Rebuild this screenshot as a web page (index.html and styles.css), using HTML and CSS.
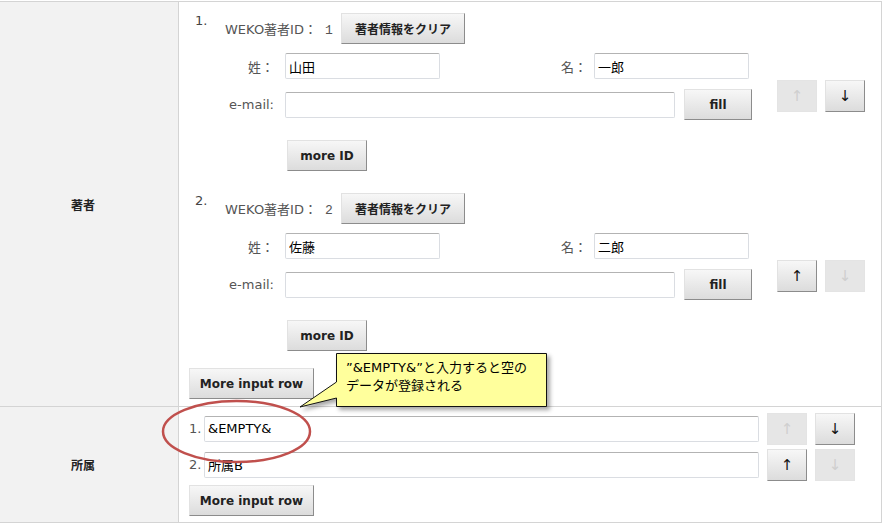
FILE: index.html
```html
<!DOCTYPE html>
<html lang="ja">
<head>
<meta charset="utf-8">
<title>著者・所属 入力</title>
<link rel="stylesheet" href="styles.css">
</head>
<body>
<div class="form">
  <div class="th th-author">著者</div>
  <div class="td td-author">
    <div class="author">
      <span class="num">1.</span>
      <div class="fields">
        <div class="id-row"><span class="lbl-id">WEKO著者ID：<span class="id-val">1</span></span><button class="btn btn-clear">著者情報をクリア</button></div>
        <div class="name-row"><label class="lbl">姓：</label><input class="inp inp-name" value="山田"><label class="lbl lbl-given">名：</label><input class="inp inp-name" value="一郎"></div>
        <div class="mail-row"><label class="lbl">e-mail:</label><input class="inp inp-mail" value=""><button class="btn btn-fill">fill</button></div>
        <div class="more-row"><button class="btn btn-more">more ID</button></div>
      </div>
      <div class="order order-author"><button class="btn btn-arrow" disabled>↑</button><button class="btn btn-arrow">↓</button></div>
    </div>
    <div class="author">
      <span class="num">2.</span>
      <div class="fields">
        <div class="id-row"><span class="lbl-id">WEKO著者ID：<span class="id-val">2</span></span><button class="btn btn-clear">著者情報をクリア</button></div>
        <div class="name-row"><label class="lbl">姓：</label><input class="inp inp-name" value="佐藤"><label class="lbl lbl-given">名：</label><input class="inp inp-name" value="二郎"></div>
        <div class="mail-row"><label class="lbl">e-mail:</label><input class="inp inp-mail" value=""><button class="btn btn-fill">fill</button></div>
        <div class="more-row"><button class="btn btn-more">more ID</button></div>
      </div>
      <div class="order order-author"><button class="btn btn-arrow">↑</button><button class="btn btn-arrow" disabled>↓</button></div>
    </div>
    <button class="btn btn-row">More input row</button>
  </div>

  <div class="th th-aff">所属</div>
  <div class="td td-aff">
    <div class="aff-row">
      <span class="aff-num">1.</span><input class="inp inp-aff" value="&amp;EMPTY&amp;">
      <div class="order order-aff"><button class="btn btn-arrow" disabled>↑</button><button class="btn btn-arrow">↓</button></div>
    </div>
    <div class="aff-row">
      <span class="aff-num">2.</span><input class="inp inp-aff" value="所属B">
      <div class="order order-aff"><button class="btn btn-arrow">↑</button><button class="btn btn-arrow" disabled>↓</button></div>
    </div>
    <button class="btn btn-row">More input row</button>
  </div>
</div>

<svg class="overlay" width="883" height="524" viewBox="0 0 883 524" aria-hidden="true">
  <path class="callout-shape" d="M336.5,353.5 H546.5 V406.5 H336.5 V398 L300,407 L336.5,382 Z"/>
  <ellipse class="mark" cx="236.5" cy="431.5" rx="73.5" ry="30.5"/>
</svg>
<div class="callout-text">”&amp;EMPTY&amp;”と入力すると空の<br>データが登録される</div>
</body>
</html>
```

FILE: styles.css
```css
* { box-sizing: border-box; }
html, body { margin: 0; padding: 0; background: #fff; }
body {
  font-family: "DejaVu Sans", "Noto Sans CJK JP", sans-serif;
  font-size: 13px;
  color: #333;
  position: relative;
  width: 883px;
  height: 524px;
  overflow: hidden;
}

.form {
  margin-top: 1px;
  width: 882px;
  display: grid;
  grid-template-columns: 179px 702px;
  border-top: 1px solid #d4d4d4;
  border-right: 1px solid #d4d4d4;
}

.th {
  background: #f2f2f2;
  border-right: 1px solid #d4d4d4;
  border-bottom: 1px solid #d4d4d4;
  display: flex;
  align-items: center;
  justify-content: center;
  padding-right: 12px;
  font-weight: bold;
  font-size: 12px;
  color: #222;
}
.td { border-bottom: 1px solid #d4d4d4; }
.th-author, .td-author { height: 405px; }
.th-aff, .td-aff { height: 116px; }

.td-author { padding: 11px 0 0 10px; }
.td-aff { padding: 6px 0 0 10px; }

/* buttons */
.btn {
  font-family: "DejaVu Sans", "Noto Sans CJK JP", sans-serif;
  font-weight: bold;
  font-size: 12px;
  color: #222;
  height: 31px;
  padding: 0;
  border: 1px solid;
  border-color: #e2e2e2 #8c8c8c #8c8c8c #e2e2e2;
  border-radius: 0;
  background: linear-gradient(#f7f7f7, #dcdcdc);
  display: block;
}
.btn:disabled {
  background: #e6e6e6;
  border-color: #e4e4e4;
  color: #cfcfcf;
}
.btn-clear { width: 124px; }
.btn-fill { width: 68px; margin-left: 9px; }
.btn-more { width: 80px; }
.btn-row { width: 125px; }
.btn-arrow { width: 40px; height: 32px; font-weight: normal; font-size: 15px; color: #111; }

/* inputs */
.inp {
  height: 26px;
  border: 1px solid #dadde2;
  border-top-color: #b3b3b3;
  border-radius: 2px;
  padding: 0 3px;
  font-family: "DejaVu Sans", "Noto Sans CJK JP", sans-serif;
  font-size: 13px;
  color: #000;
  background: #fff;
}
.inp-name { width: 155px; }
.inp-mail { width: 390px; }
.inp-aff { width: 555px; }

/* author block */
.author {
  display: flex;
  padding-left: 6px;
  height: 158px;
}
.author + .author { margin-top: 22px; }
.num {
  width: 30px;
  line-height: 13px;
  margin-top: 1px;
  color: #444;
}
.fields { width: 527px; }
.id-row { display: flex; align-items: center; height: 31px; }
.lbl-id { width: 116px; color: #555; }
.id-val { font-family: "Liberation Mono", monospace; margin-left: 8px; }
.name-row { display: flex; align-items: center; height: 26px; margin-top: 9px; }
.mail-row { display: flex; align-items: center; height: 31px; margin-top: 10px; }
.more-row { margin-top: 20px; padding-left: 62px; }
.lbl {
  width: 60px;
  padding-right: 11px;
  text-align: right;
  color: #555;
}
.lbl-given { width: 154px; padding-right: 7px; }

.order { display: flex; gap: 8px; }
.order-author { margin-left: 25px; margin-top: 67px; }

.td-author .btn-row { margin-top: 17px; }

/* affiliation */
.aff-row { display: flex; align-items: center; height: 31px; }
.aff-row + .aff-row { margin-top: 5px; }
.aff-num { width: 15px; color: #555; }
.order-aff { margin-left: 8px; }
.td-aff .btn-row { margin-top: 5px; }

/* overlays */
.overlay {
  position: absolute;
  left: 0;
  top: 0;
  pointer-events: none;
}
.callout-shape {
  fill: #ffff9c;
  stroke: #111;
  stroke-width: 1;
  filter: drop-shadow(3px 3px 2px rgba(0, 0, 0, 0.35));
}
.mark {
  fill: none;
  stroke: #c0504d;
  stroke-width: 2.5;
}
.callout-text {
  position: absolute;
  left: 336px;
  top: 353px;
  width: 211px;
  height: 54px;
  padding: 6px 0 0 10px;
  font-size: 13px;
  line-height: 18px;
  color: #000;
  white-space: nowrap;
}
```
